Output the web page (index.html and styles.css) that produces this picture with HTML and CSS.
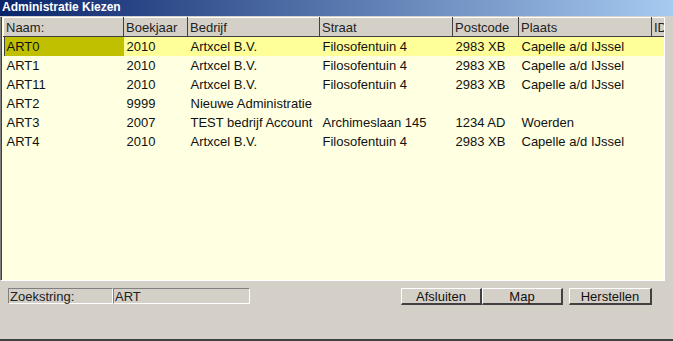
FILE: index.html
```html
<!DOCTYPE html>
<html lang="nl">
<head>
	<meta charset="UTF-8">
	<title>Administratie Kiezen</title>
	<link rel="stylesheet" href="styles.css">
</head>
<body>
	<div class="window">
		<div class="titlebar">Administratie Kiezen</div>

		<div class="grid">
			<table>
				<colgroup>
					<col class="c-naam">
					<col class="c-jaar">
					<col class="c-bedrijf">
					<col class="c-straat">
					<col class="c-post">
					<col class="c-plaats">
					<col class="c-id">
				</colgroup>
				<thead>
					<tr>
						<th>Naam:</th>
						<th>Boekjaar</th>
						<th>Bedrijf</th>
						<th>Straat</th>
						<th>Postcode</th>
						<th>Plaats</th>
						<th>ID</th>
					</tr>
				</thead>
				<tbody>
					<tr class="selected">
						<td class="current">ART0</td>
						<td>2010</td>
						<td>Artxcel B.V.</td>
						<td>Filosofentuin 4</td>
						<td>2983 XB</td>
						<td>Capelle a/d IJssel</td>
						<td></td>
					</tr>
					<tr>
						<td>ART1</td>
						<td>2010</td>
						<td>Artxcel B.V.</td>
						<td>Filosofentuin 4</td>
						<td>2983 XB</td>
						<td>Capelle a/d IJssel</td>
						<td></td>
					</tr>
					<tr>
						<td>ART11</td>
						<td>2010</td>
						<td>Artxcel B.V.</td>
						<td>Filosofentuin 4</td>
						<td>2983 XB</td>
						<td>Capelle a/d IJssel</td>
						<td></td>
					</tr>
					<tr>
						<td>ART2</td>
						<td>9999</td>
						<td>Nieuwe Administratie</td>
						<td></td>
						<td></td>
						<td></td>
						<td></td>
					</tr>
					<tr>
						<td>ART3</td>
						<td>2007</td>
						<td>TEST bedrijf Account</td>
						<td>Archimeslaan 145</td>
						<td>1234 AD</td>
						<td>Woerden</td>
						<td></td>
					</tr>
					<tr>
						<td>ART4</td>
						<td>2010</td>
						<td>Artxcel B.V.</td>
						<td>Filosofentuin 4</td>
						<td>2983 XB</td>
						<td>Capelle a/d IJssel</td>
						<td></td>
					</tr>
				</tbody>
			</table>
		</div>

		<div class="footer">
			<div class="search">
				<span class="field label">Zoekstring:</span>
				<span class="field value">ART</span>
			</div>
			<div class="buttons">
				<button>Afsluiten</button>
				<button>Map</button>
				<button class="spaced">Herstellen</button>
			</div>
		</div>
	</div>
</body>
</html>
```

FILE: styles.css
```css
body {
	margin: 0;
	padding: 0;
	background-color: #d4d0c8;
	font-family: "Liberation Sans", Arial, sans-serif;
	font-size: 13px;
	color: #000;
}

.window {
	width: 673px;
	height: 341px;
	box-sizing: border-box;
	border-bottom: 2px solid #404040;
	display: flex;
	flex-direction: column;
}

.titlebar {
	height: 16px;
	line-height: 15px;
	padding-left: 2px;
	background: linear-gradient(to right, #0a246a, #a6caf0);
	color: #fff;
	font-weight: bold;
	font-size: 12px;
}

.grid {
	margin-top: 1px;
	width: 665px;
	height: 264px;
	box-sizing: border-box;
	background-color: #ffffe1;
	border-left: 1px solid #808080;
	border-bottom: 1px solid #fff;
	border-right: 1px solid #fff;
	box-shadow: inset 1px 0 0 #404040;
	padding-left: 2px;
	overflow: hidden;
}

table {
	border-collapse: collapse;
	table-layout: fixed;
	width: 663px;
}

.c-naam { width: 120px; }
.c-jaar { width: 64px; }
.c-bedrijf { width: 132px; }
.c-straat { width: 133px; }
.c-post { width: 66px; }
.c-plaats { width: 133px; }
.c-id { width: 15px; }

th {
	height: 19px;
	padding: 0 0 0 2px;
	box-sizing: border-box;
	background-color: #d4d0c8;
	font-weight: normal;
	text-align: left;
	white-space: nowrap;
	overflow: hidden;
	text-overflow: clip;
	color: #222;
	border-top: 1px solid #fff;
	border-left: 1px solid #fff;
	border-bottom: 1px solid #404040;
	border-right: 1px solid #404040;
}

td {
	height: 19px;
	padding: 0 0 0 3px;
	white-space: nowrap;
	overflow: hidden;
	color: #111;
}

.selected td {
	background-color: #ffff99;
}

.selected td.current {
	background-color: #c0c000;
	box-shadow: inset 1px 0 0 #404040;
}

.footer {
	display: flex;
	align-items: flex-start;
	padding-top: 7px;
}

.search {
	display: flex;
	margin-left: 8px;
}

.field {
	height: 16px;
	box-sizing: border-box;
	border-top: 1px solid #808080;
	border-left: 1px solid #808080;
	border-bottom: 1px solid #fff;
	border-right: 1px solid #fff;
	line-height: 15px;
	padding-left: 1px;
	color: #222;
}

.label {
	width: 105px;
}

.value {
	width: 137px;
}

.buttons {
	display: flex;
	margin-left: 151px;
}

button {
	height: 17px;
	width: 81px;
	padding: 0;
	font-family: inherit;
	font-size: 13px;
	color: #111;
	background-color: #d4d0c8;
	border-top: 1px solid #fff;
	border-left: 1px solid #fff;
	border-bottom: 2px solid #404040;
	border-right: 2px solid #404040;
	line-height: 13px;
}

button.spaced {
	margin-left: 6px;
	width: 83px;
}
```
